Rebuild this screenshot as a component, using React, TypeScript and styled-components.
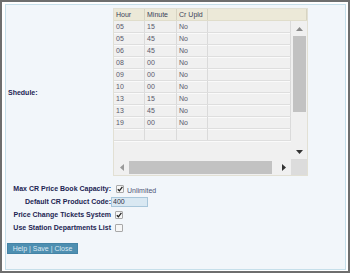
import React from 'react';
import styled, { createGlobalStyle } from 'styled-components';

const GlobalStyle = createGlobalStyle`
  html, body {
    margin: 0;
    padding: 0;
    background: #ffffff;
  }
  body {
    font-family: 'Liberation Sans', Arial, sans-serif;
  }
`;

const Frame = styled.div`
  width: 350px;
  height: 273px;
  box-sizing: border-box;
  border: 2px solid #6e6e6e;
  padding: 2px 2px 1px 3px;
  display: flex;
  background: #ffffff;
`;

const Panel = styled.div`
  flex: 1;
  border: 1px solid #c6dfea;
  background: #f2f6fa;
  padding: 3px 0 0 0;
  display: flex;
  flex-direction: column;
`;

const Form = styled.div`
  display: grid;
  grid-template-columns: 105px 1fr;
  column-gap: 2px;
`;

const Label = styled.div<{ $left?: boolean }>`
  font-size: 7px;
  font-weight: bold;
  color: #1c2452;
  display: flex;
  align-items: center;
  justify-content: ${p => (p.$left ? 'flex-start' : 'flex-end')};
  padding-left: ${p => (p.$left ? '2px' : '0')};
  white-space: nowrap;
`;

const Value = styled.div`
  display: flex;
  align-items: center;
  height: 13px;
`;

const Spacer = styled.div`
  grid-column: 1 / 3;
  height: 6px;
`;

const Grid = styled.div`
  width: 195px;
  height: 168px;
  box-sizing: border-box;
  border: 1px solid #e2e0d4;
  background: #f0f0f0;
  display: grid;
  grid-template-columns: 1fr 16px;
  grid-template-rows: 12px 1fr 16px;
`;

const HeaderRow = styled.div`
  grid-column: 1 / 3;
  display: flex;
  background: #ece9d8;
  border-bottom: 1px solid #e0ddcb;
`;

const HeadCell = styled.div<{ $w?: number }>`
  width: ${p => (p.$w ? `${p.$w}px` : 'auto')};
  flex: ${p => (p.$w ? 'none' : '1')};
  box-sizing: border-box;
  border-right: 1px solid #d7d4c2;
  font-size: 7px;
  color: #3a3f58;
  padding-left: 2px;
  display: flex;
  align-items: center;
`;

const Body = styled.div`
  overflow: hidden;
`;

const Row = styled.div`
  display: flex;
  height: 12px;
  box-sizing: border-box;
  border-bottom: 1px solid #dedede;
  box-shadow: 0 1px 0 #fafafa;
`;

const Cell = styled.div<{ $w?: number }>`
  width: ${p => (p.$w ? `${p.$w}px` : 'auto')};
  flex: ${p => (p.$w ? 'none' : '1')};
  box-sizing: border-box;
  border-right: 1px solid #dadada;
  font-size: 7px;
  color: #58586a;
  padding-left: 2px;
  display: flex;
  align-items: center;
`;

const VScroll = styled.div`
  display: flex;
  flex-direction: column;
  align-items: center;
  background: #f0f0f0;
`;

const ArrowBox = styled.div<{ $color: string }>`
  height: 15px;
  width: 100%;
  display: flex;
  align-items: center;
  justify-content: center;
  color: ${p => p.$color};
`;

const VThumb = styled.div`
  width: 13px;
  height: 76px;
  background: #c2c2c2;
`;

const Fill = styled.div`
  flex: 1;
`;

const HScroll = styled.div`
  display: flex;
  align-items: center;
  background: #f0f0f0;
`;

const HArrow = styled.div<{ $color: string }>`
  width: 15px;
  height: 100%;
  display: flex;
  align-items: center;
  justify-content: center;
  color: ${p => p.$color};
`;

const HThumb = styled.div`
  width: 143px;
  height: 13px;
  background: #c2c2c2;
`;

const Corner = styled.div`
  background: #dcdcdc;
`;

const Check = styled.span<{ $ml?: number }>`
  width: 6px;
  height: 6px;
  margin-left: ${p => p.$ml ?? 2}px;
  border: 1px solid #a8a8a8;
  border-radius: 1px;
  background: #f6f6f6;
  display: inline-flex;
  align-items: center;
  justify-content: center;
`;

const Note = styled.span`
  font-size: 7px;
  color: #4f5577;
  margin-left: 3px;
  margin-top: 4px;
`;

const CodeInput = styled.input`
  width: 37px;
  height: 10px;
  box-sizing: border-box;
  margin-left: -2px;
  padding: 0 0 0 1px;
  border: 1px solid #a8c6da;
  background: #d9e8f2;
  font-family: 'Liberation Sans', Arial, sans-serif;
  font-size: 7px;
  color: #333344;
  outline: none;
`;

const ButtonBar = styled.div`
  margin: 9px 0 0 1px;
  display: flex;
`;

const Buttons = styled.div`
  width: 71px;
  height: 11px;
  box-sizing: border-box;
  background: #4e8fb1;
  border: 1px solid #4584a6;
  font-size: 7px;
  color: #dde9f2;
  display: flex;
  align-items: center;
  justify-content: center;
  white-space: nowrap;
`;

const schedule = [
  ['05', '15'],
  ['05', '45'],
  ['06', '45'],
  ['08', '00'],
  ['09', '00'],
  ['10', '00'],
  ['13', '15'],
  ['13', '45'],
  ['19', '00'],
];

const Tick = () => (
  <svg width="6" height="6" viewBox="0 0 6 6">
    <path d="M0.8 3.2 L2.4 4.8 L5.4 0.8" fill="none" stroke="#222" strokeWidth="1.3" />
  </svg>
);

const Tri = ({ dir }: { dir: 'up' | 'down' | 'left' | 'right' }) => {
  const pts = {
    up: '0,4 3.5,0 7,4',
    down: '0,0 3.5,4 7,0',
    left: '4,0 0,3.5 4,7',
    right: '0,0 4,3.5 0,7',
  }[dir];
  const horiz = dir === 'left' || dir === 'right';
  return (
    <svg width={horiz ? 4 : 7} height={horiz ? 7 : 4} viewBox={horiz ? '0 0 4 7' : '0 0 7 4'}>
      <polygon points={pts} fill="currentColor" />
    </svg>
  );
};

const App: React.FC = () => {
  return (
    <>
      <GlobalStyle />
      <Frame>
        <Panel>
          <Form>
            <Label $left>Shedule:</Label>
            <div>
              <Grid>
                <HeaderRow>
                  <HeadCell $w={31}>Hour</HeadCell>
                  <HeadCell $w={32}>Minute</HeadCell>
                  <HeadCell $w={31}>Cr Upld</HeadCell>
                  <HeadCell />
                </HeaderRow>
                <Body>
                  {schedule.map(([h, m], i) => (
                    <Row key={i}>
                      <Cell $w={31}>{h}</Cell>
                      <Cell $w={32}>{m}</Cell>
                      <Cell $w={31}>No</Cell>
                      <Cell />
                    </Row>
                  ))}
                  <Row>
                    <Cell $w={31} />
                    <Cell $w={32} />
                    <Cell $w={31} />
                    <Cell />
                  </Row>
                </Body>
                <VScroll>
                  <ArrowBox $color="#8a8a8a">
                    <Tri dir="up" />
                  </ArrowBox>
                  <VThumb />
                  <Fill />
                  <ArrowBox $color="#333333">
                    <Tri dir="down" />
                  </ArrowBox>
                </VScroll>
                <HScroll>
                  <HArrow $color="#9a9a9a">
                    <Tri dir="left" />
                  </HArrow>
                  <HThumb />
                  <Fill />
                  <HArrow $color="#333333">
                    <Tri dir="right" />
                  </HArrow>
                </HScroll>
                <Corner />
              </Grid>
            </div>

            <Spacer />

            <Label>Max CR Price Book Capacity:</Label>
            <Value>
              <Check $ml={3}>
                <Tick />
              </Check>
              <Note>Unlimited</Note>
            </Value>

            <Label>Default CR Product Code:</Label>
            <Value>
              <CodeInput defaultValue="400" />
            </Value>

            <Label>Price Change Tickets System</Label>
            <Value>
              <Check>
                <Tick />
              </Check>
            </Value>

            <Label>Use Station Departments List</Label>
            <Value>
              <Check />
            </Value>
          </Form>

          <ButtonBar>
            <Buttons>Help | Save | Close</Buttons>
          </ButtonBar>
        </Panel>
      </Frame>
    </>
  );
};

export default App;
